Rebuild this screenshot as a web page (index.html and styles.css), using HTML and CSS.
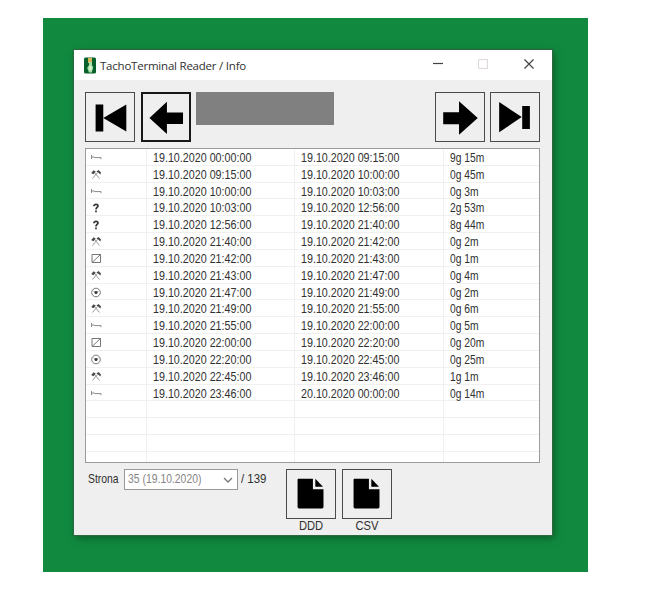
FILE: index.html
```html
<!DOCTYPE html>
<html lang="pl">
<head>
<meta charset="utf-8">
<title>TachoTerminal Reader / Info</title>
<link rel="stylesheet" href="styles.css">
</head>
<body>
<svg class="defs" width="0" height="0">
  <symbol id="bed" viewBox="0 0 12 12"><path d="M1.500 3v4M1.500 5H4l1 .6h6v1.600" fill="none" stroke="#8a8a8a"/></symbol>
  <symbol id="work" viewBox="0 0 12 12"><path d="M2.500 9.500 7.500 3.500M9.500 9.500 4.500 3.500" stroke="#999" fill="none"/><path d="M1.200 4 3.600 1.200l2.200 1.600-2.400 2.400zM6.400 2.400 8.600 1.100 11 3.600 10.400 5.400 8.400 3.800z" fill="#4a4a4a"/></symbol>
  <symbol id="unknown" viewBox="0 0 12 12"><path d="M3.800 4.300C3.800 1.600 8.400 1.800 8 4.200 7.800 5.500 6 5.600 6 7.500M6 8.400v1.800" stroke="#333" stroke-width="1.700" fill="none"/></symbol>
  <symbol id="ready" viewBox="0 0 12 12"><path d="M2 1.500h8.500v8H2zM2 9.500l8.500-8" stroke="#777" fill="none"/></symbol>
  <symbol id="drive" viewBox="0 0 12 12"><circle cx="6" cy="5.500" r="4.300" stroke="#777" fill="none"/><path d="M3.500 4 6 5.500 8.500 4" stroke="#888" stroke-width=".7" fill="none"/><circle cx="6" cy="5.500" r="1.500" fill="#333"/></symbol>
</svg>
<main class="backdrop">
  <section class="window">
    <header class="titlebar">
      <svg class="app-icon" viewBox="0 0 12 17"><rect y=".5" width="12" height="16" rx="1.500" fill="#075f2b"/><path d="M4 1h4v5H4z" fill="#d8b65c"/><path d="M5 5h3v3l1.200 2.500-1.400 5H5L3.200 11 5 8z" fill="#a8dfa5"/><path d="M5.500 9h2v4h-2z" fill="#e8f5dc"/></svg>
      <h1>TachoTerminal Reader / Info</h1>
      <svg class="controls" viewBox="0 0 104 12"><path d="M1 5.500h10" stroke="#444" stroke-width="1.200"/><path d="M46.500 1.500h9v9h-9z" fill="none" stroke="#dfd5dc"/><path d="m92.500 1.500 9 9M101.500 1.500l-9 9" stroke="#444" stroke-width="1.200"/></svg>
    </header>
    <div class="toolbar">
      <button class="tool"><svg viewBox="0 0 50 50"><path d="M10 12h8v28h-8zM18 26 42 12v28z"/></svg></button>
      <button class="tool active"><svg viewBox="0 0 50 50"><path d="M7 26 26 8.500V20h17.500v12.500H26V43.500z"/></svg></button>
      <div class="name-box"></div>
      <button class="tool next"><svg viewBox="0 0 50 50"><path d="M7.500 20h16.500V8.500L43.500 26 24 43.500V32.500H7.500z"/></svg></button>
      <button class="tool"><svg viewBox="0 0 50 50"><path d="M8.500 9.500 32 25 8.500 41zM32.500 13.500h8v24h-8z"/></svg></button>
    </div>
    <div class="list" id="list"></div>
    <footer class="footer">
      <span class="page-label"><span class="text">Strona</span></span>
      <div class="select"><span class="text">35 (19.10.2020)</span><svg viewBox="0 0 10 6"><path d="m1 1 4 4 4-4" fill="none" stroke="#777" stroke-width="1.300"/></svg></div>
      <span class="total"><span class="text">/ 139</span></span>
      <div class="export"><button class="tool"><svg viewBox="0 0 50 50"><path d="M11.500 9H27v11h11v18.500q0 1.500-1.500 1.500h-24Q11 40 11 38.500V10zM29.500 9 37.500 17.500h-8z"/></svg></button><span class="caption">DDD</span></div>
      <div class="export"><button class="tool"><svg viewBox="0 0 50 50"><path d="M11.500 9H27v11h11v18.500q0 1.500-1.500 1.500h-24Q11 40 11 38.500V10zM29.500 9 37.500 17.500h-8z"/></svg></button><span class="caption">CSV</span></div>
    </footer>
  </section>
</main>
<script src="script.js"></script>
</body>
</html>
```
FILE: styles.css
```css
* { box-sizing: border-box; }
body { margin: 0; padding: 18px 0 0 43px; background: #fff; color: #303030; font-family: "Liberation Sans", sans-serif; font-size: 13px; }
.defs { position: absolute; }
.backdrop { width: 544.500px; height: 553.500px; padding: 32px 0 0 31px; background: #118a40; }
.window { width: 478px; height: 485px; background: #efefef; box-shadow: 0 0 1px 1px #2d6841, 2px 3px 8px rgba(0, 40, 10, .5); }
.titlebar { display: flex; align-items: center; height: 30px; padding: 0 16px 0 10px; background: #fff; }
.app-icon { width: 12px; height: 17px; }
.titlebar h1 { margin: 0 0 0 4px; font: 400 11.500px "Open Sans", "Noto Sans", sans-serif; letter-spacing: -.22px; white-space: nowrap; }
.controls { width: 104px; height: 12px; margin-left: auto; margin-top: -2px; }
.toolbar { display: flex; gap: 6px; height: 68px; padding: 12px 12px 0 11px; }
.tool { display: block; flex: none; width: 50px; height: 50px; padding: 0; border: 1px solid #4a4a4a; background: #efefef; }
.tool svg { display: block; width: 48px; height: 48px; }
.tool.active { border: 2px solid #181818; }
.tool.active svg { width: 46px; height: 46px; }
.name-box { width: 138px; height: 33px; margin-left: -1.500px; background: #808080; }
.next { margin-left: auto; margin-right: -1px; }
.list { width: 455px; height: 315px; margin-left: 11px; border: 1px solid #979ca1; background: #fff; overflow: hidden; }
.row { display: grid; grid-template-columns: 61px 148px 149px 1fr; height: 16.830px; line-height: 18px; border-bottom: 1px solid #f0f0f0; }
.cell { padding-left: 6px; border-right: 1px solid #f0f0f0; white-space: pre; height: 16.830px; }
.cell:last-child { border-right: 0; }
.cell:first-child { padding: 3px 0 0 4px; }
.cell svg { display: block; width: 12px; height: 12px; }
.text { display: inline-block; transform: scaleX(.825); transform-origin: left; white-space: nowrap; }
.cell:last-child .text { transform: scaleX(.79); }
.footer { display: flex; padding: 6px 0 0 14px; }
.page-label { width: 36px; line-height: 20px; }
.page-label .text { transform: scaleX(.8); }
.select { display: flex; align-items: center; justify-content: space-between; width: 114px; height: 21px; padding: 0 4px 0 3px; border: 1px solid #999; background: #fff; color: #858585; }
.select .text { width: 78px; margin-top: -2px; transform: scaleX(.8); }
.select svg { width: 10px; height: 6px; }
.total { width: 48px; padding-left: 3px; line-height: 20px; }
.total .text { transform: scaleX(.88); }
.export { width: 50px; margin-right: 6px; text-align: center; }
.caption { display: block; line-height: 13px; transform: scaleX(.86); }
```
FILE: script.js
```js
const rows = [
  ["bed", "19.10.2020 00:00:00", "19.10.2020 09:15:00", "9g 15m"],
  ["work", "19.10.2020 09:15:00", "19.10.2020 10:00:00", "0g 45m"],
  ["bed", "19.10.2020 10:00:00", "19.10.2020 10:03:00", "0g 3m"],
  ["unknown", "19.10.2020 10:03:00", "19.10.2020 12:56:00", "2g 53m"],
  ["unknown", "19.10.2020 12:56:00", "19.10.2020 21:40:00", "8g 44m"],
  ["work", "19.10.2020 21:40:00", "19.10.2020 21:42:00", "0g 2m"],
  ["ready", "19.10.2020 21:42:00", "19.10.2020 21:43:00", "0g 1m"],
  ["work", "19.10.2020 21:43:00", "19.10.2020 21:47:00", "0g 4m"],
  ["drive", "19.10.2020 21:47:00", "19.10.2020 21:49:00", "0g 2m"],
  ["work", "19.10.2020 21:49:00", "19.10.2020 21:55:00", "0g 6m"],
  ["bed", "19.10.2020 21:55:00", "19.10.2020 22:00:00", "0g 5m"],
  ["ready", "19.10.2020 22:00:00", "19.10.2020 22:20:00", "0g 20m"],
  ["drive", "19.10.2020 22:20:00", "19.10.2020 22:45:00", "0g 25m"],
  ["work", "19.10.2020 22:45:00", "19.10.2020 23:46:00", "1g 1m"],
  ["bed", "19.10.2020 23:46:00", "20.10.2020 00:00:00", "0g 14m"],
  ["", "", "", ""], ["", "", "", ""], ["", "", "", ""], ["", "", "", ""]
];
const cell = (content) => `<div class="cell">${content}</div>`;
document.getElementById("list").innerHTML = rows.map(([icon, ...texts]) =>
  `<div class="row">${cell(icon ? `<svg><use href="#${icon}"/></svg>` : "")}${texts.map((t) => cell(`<span class="text">${t}</span>`)).join("")}</div>`
).join("");
```
